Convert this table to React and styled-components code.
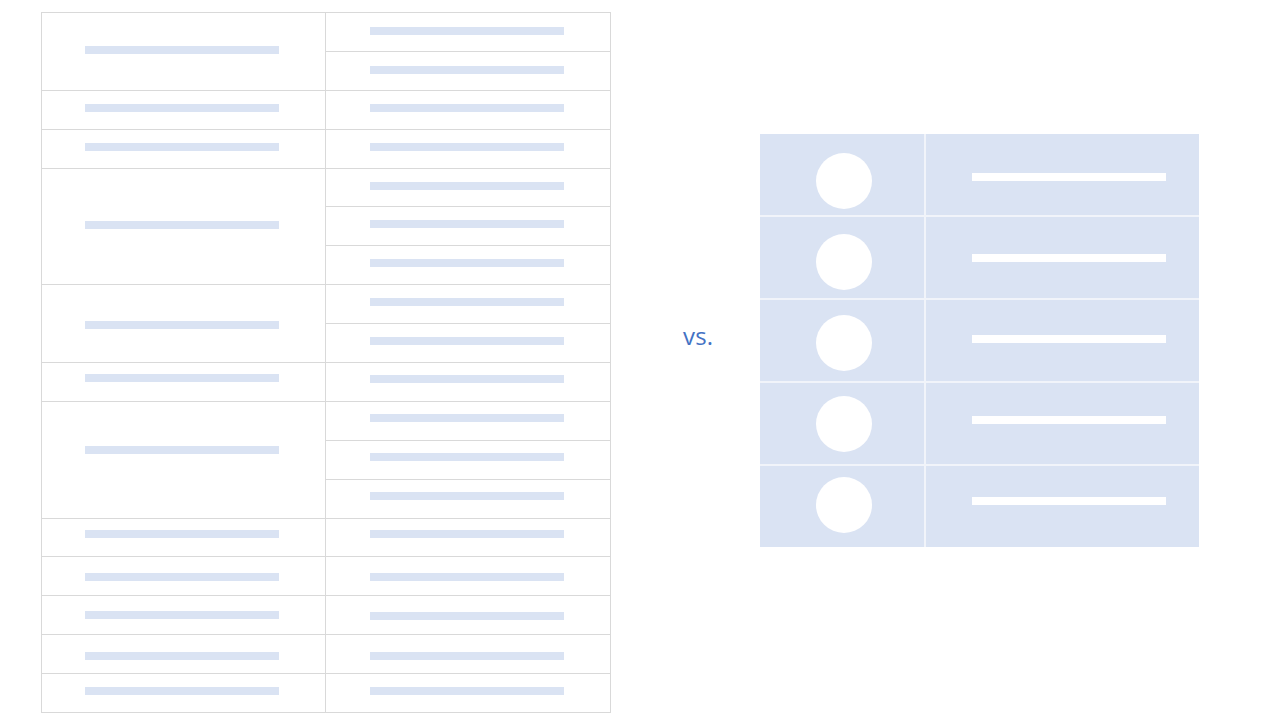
import React from "react";
import styled, { createGlobalStyle } from "styled-components";

const GlobalStyle = createGlobalStyle`
  html, body { margin: 0; padding: 0; background: #ffffff; }
  body { font-family: "Open Sans", "Liberation Sans", sans-serif; }
`;

const Page = styled.div`
  width: 1280px;
  height: 720px;
  display: flex;
  align-items: flex-start;
  padding: 12px 0 0 41px;
  box-sizing: border-box;
  overflow: hidden;
`;

const GridTable = styled.div`
  display: grid;
  grid-template-columns: 284px 285px;
  grid-template-rows: repeat(18, 1fr);
  width: 570px;
  height: 701px;
  box-sizing: border-box;
  border-top: 1px solid #d9d9d9;
  border-left: 1px solid #d9d9d9;
`;

const GridCell = styled.div`
  grid-column: ${(p) => p.$col};
  grid-row: ${(p) => p.$row} / span ${(p) => p.$span};
  border-right: 1px solid #d9d9d9;
  border-bottom: 1px solid #d9d9d9;
  display: flex;
  align-items: center;
  justify-content: center;
  padding-right: ${(p) => (p.$col === 1 ? "4px" : "2px")};
  box-sizing: border-box;

  & > * {
    margin-top: ${(p) => p.$shift * 2}px;
  }
`;

const Line = styled.div`
  width: 194px;
  height: 8px;
  flex: none;
  background: ${(p) => (p.$light ? "#ffffff" : "#dae3f3")};
`;

const Side = styled.div`
  display: flex;
  align-items: center;
  margin-top: 122px;
  height: 413px;
`;

const Versus = styled.span`
  margin-left: 72px;
  margin-right: 47px;
  margin-top: -10px;
  font-family: "Open Sans", "Liberation Sans", sans-serif;
  font-size: 24px;
  color: #4472c4;
  letter-spacing: 0.2px;
`;

const IconTable = styled.div`
  display: grid;
  grid-template-columns: 164px 273px;
  grid-template-rows: repeat(5, 1fr);
  gap: 2px;
  width: 439px;
  height: 413px;
  background: #f1f4fa;
`;

const IconCell = styled.div`
  background: #dae3f3;
  display: flex;
  align-items: center;
  justify-content: ${(p) => (p.$start ? "flex-start" : "center")};
  padding-left: ${(p) => (p.$start ? "46px" : "4px")};
  box-sizing: border-box;

  & > * {
    margin-top: ${(p) => p.$shift * 2}px;
  }
`;

const Dot = styled.div`
  width: 56px;
  height: 56px;
  flex: none;
  border-radius: 50%;
  background: #ffffff;
`;

const groups = [
  { span: 2, shift: -1 },
  { span: 1, shift: -1.5 },
  { span: 1, shift: -1.5 },
  { span: 3, shift: -1 },
  { span: 2, shift: 1 },
  { span: 1, shift: -3.5 },
  { span: 3, shift: -9.5 },
  { span: 1, shift: -3.5 },
  { span: 1, shift: 0.5 },
  { span: 1, shift: 0 },
  { span: 1, shift: 1.5 },
  { span: 1, shift: -2.5 },
];

const rightShifts = [
  -1, -1, -1.5, -1.5, -1.5, -2, -2, -2, -2, -2.5, -2.5, -2.5, -2.5, -3, 1, 1, 2, -2,
];

export default function App() {
  const cells = [];
  let row = 1;
  groups.forEach(({ span, shift }, g) => {
    cells.push(
      <GridCell key={`l${g}`} $col={1} $row={row} $span={span} $shift={shift}>
        <Line />
      </GridCell>
    );
    for (let i = 0; i < span; i++) {
      const r = row + i;
      cells.push(
        <GridCell key={`r${r}`} $col={2} $row={r} $span={1} $shift={rightShifts[r - 1]}>
          <Line />
        </GridCell>
      );
    }
    row += span;
  });

  return (
    <>
      <GlobalStyle />
      <Page>
        <GridTable>{cells}</GridTable>
        <Side>
          <Versus>vs.</Versus>
          <IconTable>
            {[0, 1, 2, 3, 4].map((i) => (
              <React.Fragment key={i}>
                <IconCell $shift={6 - 2 * i}>
                  <Dot />
                </IconCell>
                <IconCell $start $shift={2 - 2 * i}>
                  <Line $light />
                </IconCell>
              </React.Fragment>
            ))}
          </IconTable>
        </Side>
      </Page>
    </>
  );
}
